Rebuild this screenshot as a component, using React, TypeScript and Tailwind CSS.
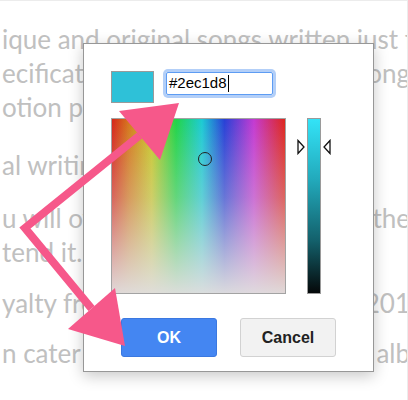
import React from 'react';

const lines: { text: string; right?: string; mt: string }[] = [
  { text: 'ique and original songs written just f', mt: 'mt-0' },
  { text: 'ecifications', right: 'ong', mt: 'mt-0' },
  { text: 'otion po', mt: 'mt-0' },
  { text: 'al writin', mt: 'mt-[24px]' },
  { text: 'u will ov', right: 'the', mt: 'mt-[19px]' },
  { text: 'tend it.', mt: 'mt-0' },
  { text: 'yalty fre', right: '201', mt: 'mt-[17px]' },
  { text: 'n cater t', right: 'alb', mt: 'mt-[16px]' },
];

const ColorDialog = () => {
  return (
    <div className="absolute left-[83px] top-[42px] w-[291px] h-[329px] bg-white border border-[#979797] shadow-[0_4px_14px_rgba(0,0,0,0.22)] pl-[27px] pt-[27px] flex flex-col">
      {/* swatch + hex field */}
      <div className="flex items-start">
        <div className="w-[43px] h-[32px] bg-[#2ec1d8] border border-[#9a9a9a]" />
        <div className="ml-[12px] mt-[1px] w-[107px] h-[23px] border border-[#5d9cf3] ring-[3px] ring-[#b3cff8] rounded-[2px] flex items-center pl-[2px] text-[15px] text-black font-['Liberation_Sans',Arial,sans-serif]">
          <span>#2ec1d8</span>
          <span className="w-px h-[17px] bg-black ml-px" />
        </div>
      </div>

      {/* spectrum + hue bar */}
      <div className="flex mt-[15px]">
        <div className="relative w-[175px] h-[176px] border border-[#a3a3a3] bg-[linear-gradient(to_bottom,rgba(226,224,224,0)_0%,rgba(220,218,218,0.35)_45%,rgba(224,222,222,0.97)_100%),linear-gradient(to_right,#d6261a_0%,#d47a1c_10%,#c8c82a_23%,#22d448_37%,#1ccbd4_52%,#2840d6_65%,#c43ad2_82%,#de261c_100%)]">
          <div className="absolute left-[86px] top-[33px] w-[14px] h-[14px] rounded-full border border-[#222]" />
        </div>
        <div className="relative ml-[11px] w-[34px] h-[176px]">
          <div className="ml-[10px] w-[14px] h-[176px] border border-[#9a9a9a] bg-[linear-gradient(to_bottom,#33e3f7_0%,#22a9bb_35%,#13606b_70%,#050809_100%)]" />
          <svg className="absolute left-0 top-[21px]" width="34" height="16" viewBox="0 0 34 16">
            <path d="M1 1.5 L7 8 L1 14.5 Z" fill="white" stroke="#111" strokeWidth="1.3" />
            <path d="M33 1.5 L27 8 L33 14.5 Z" fill="white" stroke="#111" strokeWidth="1.3" />
          </svg>
        </div>
      </div>

      {/* buttons */}
      <div className="flex justify-center gap-[23px] mt-[24px] -ml-[27px] font-['Liberation_Sans',Arial,sans-serif] text-[16px] font-bold">
        <button className="w-[96px] h-[39px] rounded-[3px] bg-[#4486f2] border border-[#3b78e0] text-white">OK</button>
        <button className="w-[96px] h-[39px] rounded-[3px] bg-[#f2f2f2] border border-[#d2d2d2] text-[#222]">Cancel</button>
      </div>
    </div>
  );
};

export default function App() {
  return (
    <div className="relative w-[408px] h-[400px] overflow-hidden bg-white border-t border-r border-[#ececec]">
      {/* page text behind the dialog */}
      <div className="pt-[21px] pl-[2px] font-['Lato','Open_Sans',sans-serif] text-[26px] leading-[34px] text-[#c0c0c0]">
        {lines.map((l, i) => (
          <div key={i} className={`flex justify-between whitespace-nowrap ${l.mt}`}>
            <span>{l.text}</span>
            {l.right && <span className="-mr-[3px]">{l.right}</span>}
          </div>
        ))}
      </div>

      <ColorDialog />

      {/* annotation arrows */}
      <svg className="absolute inset-0" width="408" height="400" viewBox="0 0 408 400">
        <polyline points="139.5,134.5 25,227 91.5,307.5" fill="none" stroke="#f6588a" strokeWidth="8" strokeLinejoin="miter" />
        <polygon points="179,102 119,110 160,159" fill="#f6588a" />
        <polygon points="125,345 68,328 115,287" fill="#f6588a" />
      </svg>
    </div>
  );
}
